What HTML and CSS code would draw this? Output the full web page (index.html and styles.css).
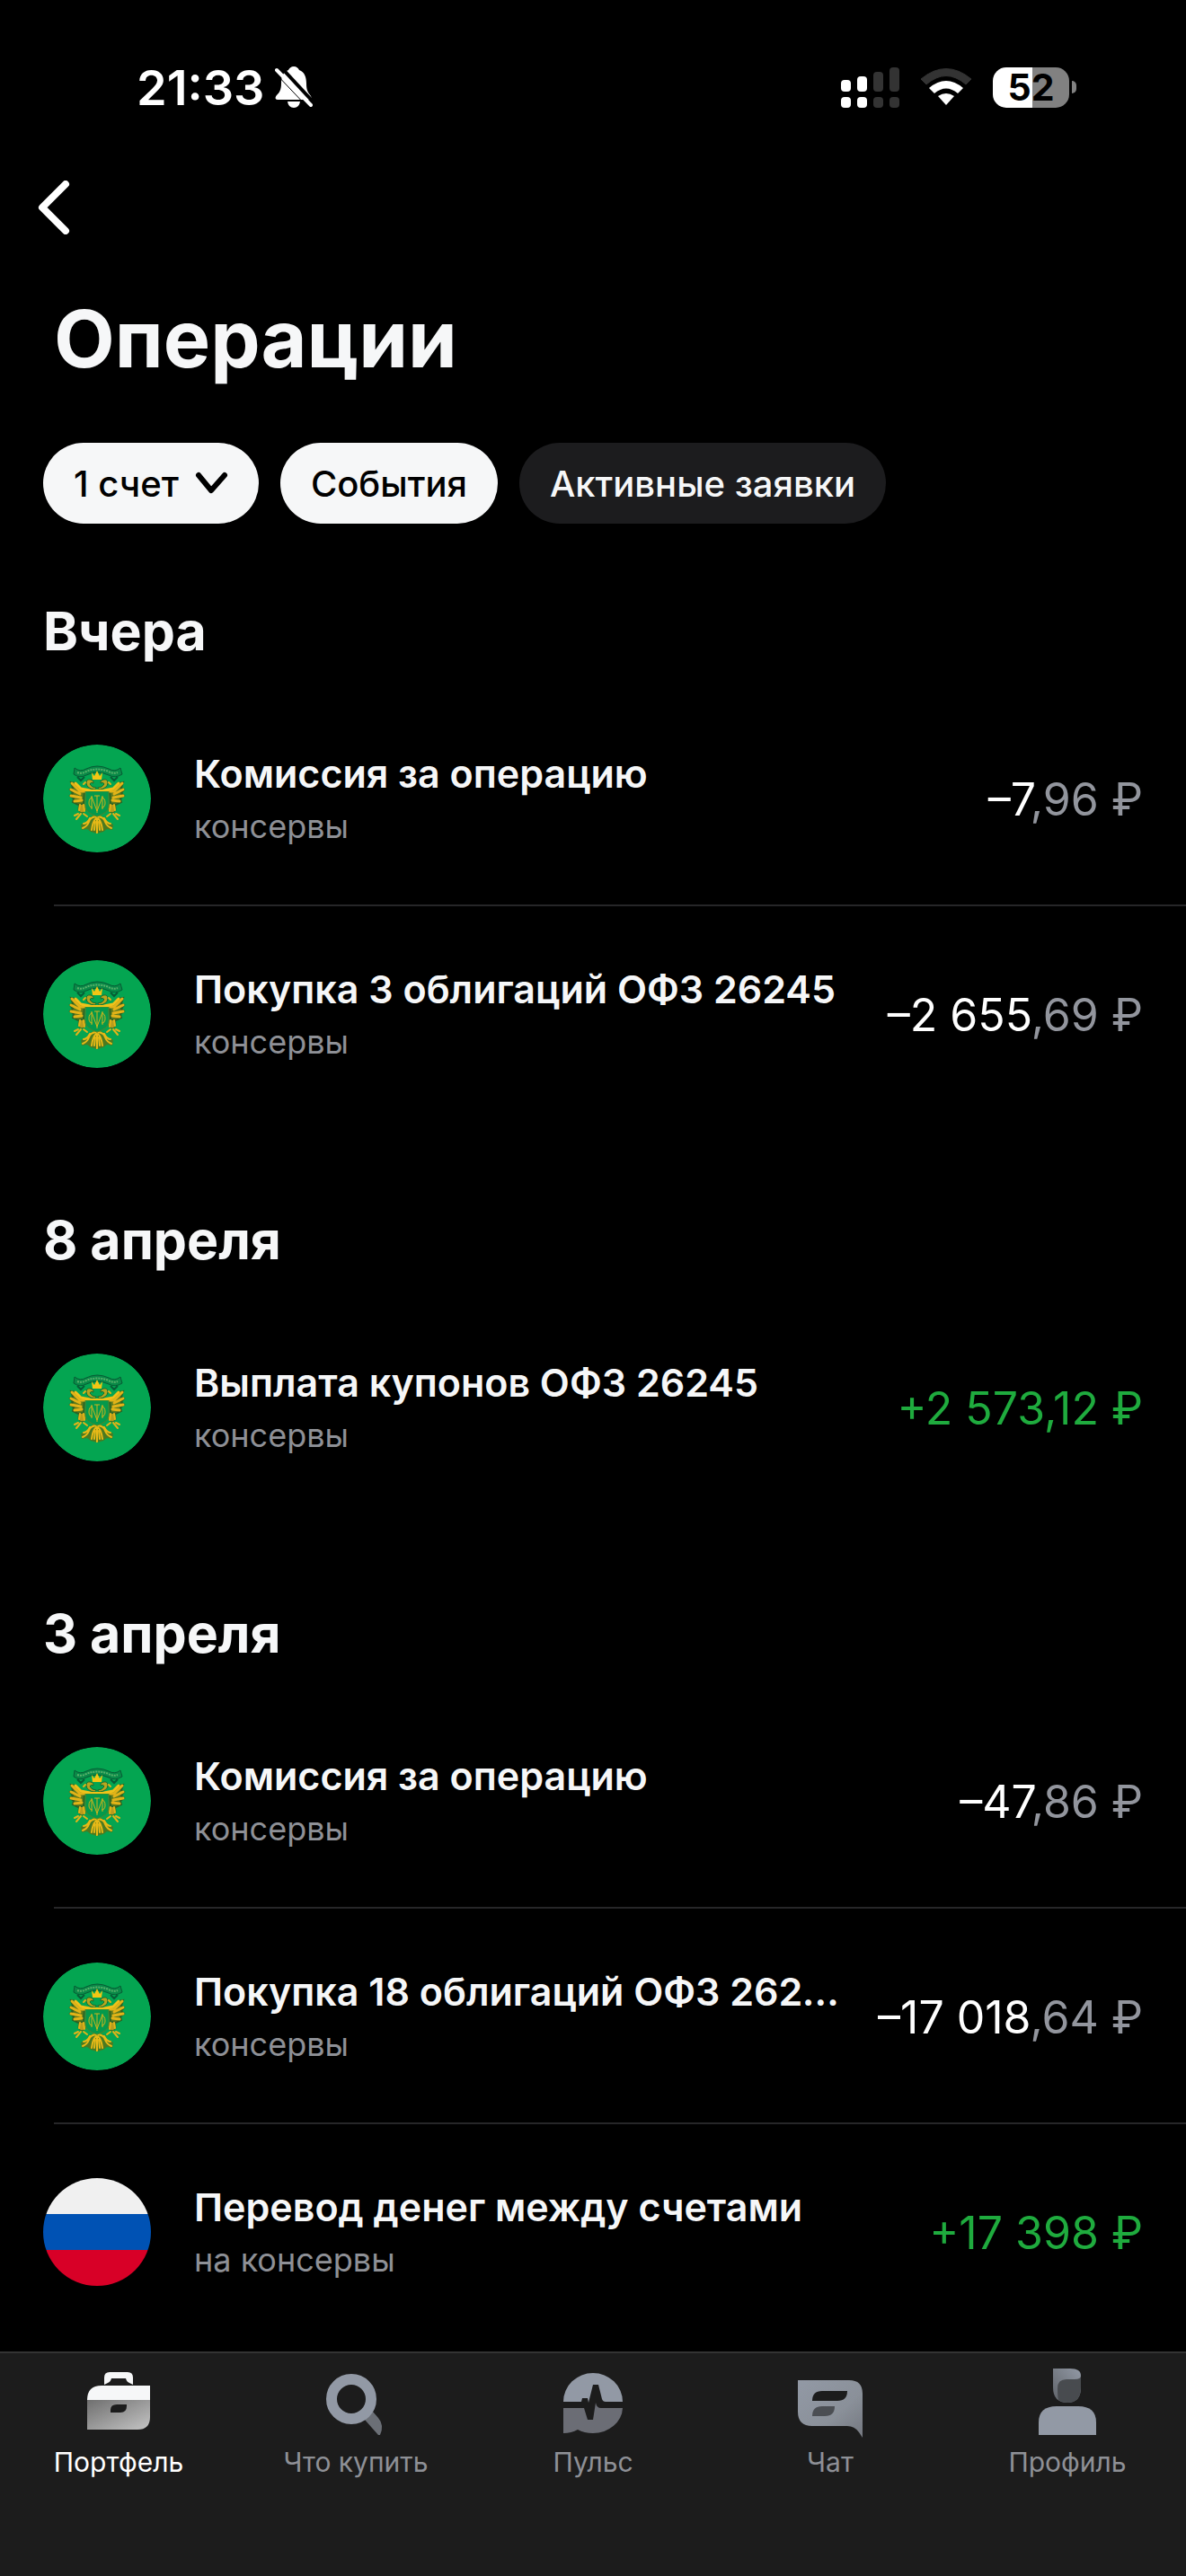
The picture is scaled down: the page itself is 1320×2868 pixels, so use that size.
FILE: index.html
```html
<!DOCTYPE html>
<html lang="ru">
<head>
<meta charset="utf-8">
<meta name="viewport" content="width=device-width, initial-scale=1">
<title>Операции</title>
<link rel="stylesheet" href="styles.css">
</head>
<body>
<svg class="defs" aria-hidden="true">
  <defs>
    <linearGradient id="case" x1="0" y1="0" x2="1" y2="1">
      <stop offset="0" stop-color="#6f6f6f"/><stop offset="1" stop-color="#c4c4c4"/>
    </linearGradient>
    <linearGradient id="steel" x1="0" y1="0" x2="1" y2="1">
      <stop offset="0" stop-color="#9299a5"/><stop offset=".6" stop-color="#8a9099"/><stop offset="1" stop-color="#747880"/>
    </linearGradient>
    <linearGradient id="hair" x1="1" y1="0" x2="0" y2="1">
      <stop offset="0" stop-color="#9299a5"/><stop offset="1" stop-color="#5f6369"/>
    </linearGradient>
    <g id="half-eagle" stroke-linecap="round" fill="none">
      <path d="M47 50L41 49L36 43L31 42L33 48L30 50L33 54L30 57L34 60L33 64L39 67L45 66L46 52Z" fill="#5f7a1c" stroke="#2a6325" stroke-width="2"/>
      <path d="M32 43L41 52H47M31 50L41 55M31 57L42 59M35 63L43 62" stroke="#e2b318" stroke-width="3"/>
      <path d="M36 43L42 49L52 51" stroke="#f0c11a" stroke-width="3"/>
      <path d="M40 67Q37 74 43 76Q49 75 47 67" fill="#b99c1c" stroke="#2f6a24" stroke-width="1"/>
      <path d="M41 67L40 73M45 67L46 74M39 77L35 79M42 77L37 83M45 77L49 80" stroke="#e2b318" stroke-width="2"/>
      <path d="M57 50Q49 49 48 43Q48 38 53 39Q57 40 56 43Q53 41 52 44Q54 48 59 48Z" fill="#b9a61f" stroke="#1c6a2c" stroke-width="1"/>
      <path d="M47 42L45 44" stroke="#e2b318" stroke-width="2"/>
      <path d="M60 79Q50 79 49 86L42 89L43 95L49 94L53 97L60 99Z" fill="#4c7a20"/>
      <path d="M59 80Q52 81 51 86Q49 91 44 93M59 82Q55 86 54 95M52 82Q49 88 45 88M60 82V98M58 86L57 95" stroke="#e8b917" stroke-width="2"/>
    </g>
    <symbol id="emblem" viewBox="0 0 120 120">
      <circle cx="60" cy="60" r="60" fill="#04a551"/>
      <path d="M35 26Q41 31 48 27Q60 21 73 27Q80 31 86 26L88 33Q80 38 73 34Q60 28 48 34Q41 38 34 33Z" fill="#0a8a48" stroke="#075c35" stroke-width="1"/>
      <path d="M38 31Q43 33 48 30Q60 25 73 30Q78 33 83 31" fill="none" stroke="#58b16a" stroke-width="2" stroke-dasharray="2 1"/>
      <path d="M38 36L42 40L46 36M83 36L79 40L75 36" fill="none" stroke="#075c35" stroke-width="2"/>
      <use href="#half-eagle"/>
      <use href="#half-eagle" transform="matrix(-1 0 0 1 120 0)"/>
      <path d="M54 31L57 35L60 29L63 35L66 31L65 39H55Z" fill="#f3c614"/>
      <path d="M47 52H73V70Q72 76 60 80Q48 76 47 70Z" fill="#04994b" stroke="#52852a" stroke-width="1"/>
      <path d="M47 51H73" stroke="#f0c317" stroke-width="2"/>
      <path d="M54 57V72M66 57V72M60 57V76M54 58L60 74L66 58M55 59Q51 59 51 65Q51 70 55 70M65 59Q69 59 69 65Q69 70 65 70M57 57H63" fill="none" stroke="#cdb41e" stroke-width="1"/>
    </symbol>
  </defs>
</svg>

<div class="status-bar">
  <div class="status-left">
    <time>21:33</time>
    <svg width="42" height="46" viewBox="0 0 42 46" role="img" aria-label="Без звука">
      <path d="M21 0C24 0 26 2 27 4C33 6 35 12 35 19C35 27 37 29 40 33C41 35 41 37 39 37H3C0 37 0 34 2 32C5 29 7 26 7 19C7 12 9 6 15 4C16 2 18 0 21 0Z" fill="#fff"/>
      <path d="M14 39H28Q27 46 21 46Q15 46 14 39Z" fill="#fff"/>
      <path d="M5 -1L44 41" stroke="#000" stroke-width="4"/>
      <path d="M2 4L40 43" stroke="#fff" stroke-width="4" stroke-linecap="round"/>
      <path d="M-1 6L37 46" stroke="#000" stroke-width="1"/>
    </svg>
  </div>
  <div class="status-right">
    <svg width="65" height="45" viewBox="0 0 65 45" role="img" aria-label="Сигнал сети">
      <g fill="#fff"><rect y="14" width="11" height="13" rx="4"/><rect x="18" y="10" width="11" height="17" rx="4"/><rect y="33" width="11" height="12" rx="4"/><rect x="18" y="33" width="11" height="12" rx="4"/></g>
      <g fill="#333"><rect x="36" y="5" width="11" height="22" rx="4"/><rect x="54" width="11" height="27" rx="4"/><rect x="36" y="33" width="11" height="12" rx="4"/><rect x="54" y="33" width="11" height="12" rx="4"/></g>
    </svg>
    <svg width="58" height="42" viewBox="0 0 58 42" role="img" aria-label="Wi-Fi">
      <path d="M1 12Q29 -11 57 12L51 18Q29 -1 7 18Z" fill="#333" stroke="#333" stroke-linejoin="round"/>
      <path d="M10 22Q29 6 48 22L42 28Q29 17 16 28Z" fill="#fff"/>
      <path d="M20 31Q29 25 38 31L29 41Z" fill="#fff"/>
    </svg>
    <div class="battery"><span class="battery-level">52</span><span class="battery-cap"></span></div>
  </div>
</div>

<header class="page-head">
  <button class="back" type="button" aria-label="Назад">
    <svg width="36" height="60" viewBox="0 0 36 60"><path d="M31 4L5 30L31 56" fill="none" stroke="#fff" stroke-width="8" stroke-linecap="round" stroke-linejoin="round"/></svg>
  </button>
  <h1>Операции</h1>
  <div class="chips">
    <button class="chip chip-on" type="button">1 счет
      <svg width="37" height="26" viewBox="0 0 37 26" aria-hidden="true"><path d="M4 4L18 21L33 4" fill="none" stroke="#000" stroke-width="6" stroke-linecap="round" stroke-linejoin="round"/></svg>
    </button>
    <button class="chip chip-on" type="button">События</button>
    <button class="chip" type="button">Активные заявки</button>
  </div>
</header>

<main>
  <section>
    <h2>Вчера</h2>
    <ul>
      <li>
        <svg class="avatar" aria-hidden="true"><use href="#emblem"/></svg>
        <div class="info"><h3>Комиссия за операцию</h3><p>консервы</p></div>
        <div class="amount">–7<span>,96 ₽</span></div>
      </li>
      <li>
        <svg class="avatar" aria-hidden="true"><use href="#emblem"/></svg>
        <div class="info"><h3>Покупка 3 облигаций ОФЗ 26245</h3><p>консервы</p></div>
        <div class="amount">–2 655<span>,69 ₽</span></div>
      </li>
    </ul>
  </section>
  <section>
    <h2>8 апреля</h2>
    <ul>
      <li>
        <svg class="avatar" aria-hidden="true"><use href="#emblem"/></svg>
        <div class="info"><h3>Выплата купонов ОФЗ 26245</h3><p>консервы</p></div>
        <div class="amount income">+2 573,12 ₽</div>
      </li>
    </ul>
  </section>
  <section>
    <h2>3 апреля</h2>
    <ul>
      <li>
        <svg class="avatar" aria-hidden="true"><use href="#emblem"/></svg>
        <div class="info"><h3>Комиссия за операцию</h3><p>консервы</p></div>
        <div class="amount">–47<span>,86 ₽</span></div>
      </li>
      <li>
        <svg class="avatar" aria-hidden="true"><use href="#emblem"/></svg>
        <div class="info"><h3>Покупка 18 облигаций ОФЗ 26245</h3><p>консервы</p></div>
        <div class="amount">–17 018<span>,64 ₽</span></div>
      </li>
      <li>
        <span class="avatar flag"></span>
        <div class="info"><h3>Перевод денег между счетами</h3><p>на консервы</p></div>
        <div class="amount income">+17 398 ₽</div>
      </li>
    </ul>
  </section>
</main>

<nav class="tabs">
  <a class="active" href="#portfolio" aria-current="page">
    <svg viewBox="0 0 96 96" aria-hidden="true">
      <path d="M32 27V19Q32 13 38 13H58Q64 13 64 19V27L60 25Q57 24 56 20H40Q39 24 36 25Z" fill="#f6f7f8"/>
      <path d="M13 44Q13 28 29 28H83V44Z" fill="#f6f7f8"/>
      <path fill-rule="evenodd" d="M13 44H83V63Q83 77 69 77H13ZM39 58V55Q39 49 46 49H57V51Q57 58 50 58Z" fill="url(#case)"/>
    </svg>
    Портфель
  </a>
  <a href="#buy">
    <svg viewBox="0 0 96 96" aria-hidden="true">
      <path d="M58 66L67 57L73 64Q80 72 75 83L73 83Z" fill="#6b6f76"/>
      <circle cx="43" cy="43" r="22" fill="none" stroke="#9299a5" stroke-width="12"/>
    </svg>
    Что купить
  </a>
  <a href="#pulse">
    <svg viewBox="0 0 96 96" aria-hidden="true">
      <path d="M15 46A33 32 0 0 1 81 46H62Q59 46 58 43L54 27H48L43 47L42 42H36L35 46Z" fill="#9299a5"/>
      <path d="M15 53H38L42 66H48L51 47Q52 53 57 53H81A33 29 0 0 1 48 81Q38 81 31 77Q24 81 15 81Z" fill="#6b6d75"/>
    </svg>
    Пульс
  </a>
  <a href="#chat">
    <svg viewBox="0 0 96 96" aria-hidden="true">
      <path d="M12 22H69Q84 22 84 37V86L80 80Q75 73 67 73H28Q12 73 12 57Z" fill="url(#steel)"/>
      <path d="M28 45Q28 34 39 34H67Q67 45 56 45Z" fill="#1c1c1c"/>
      <path d="M28 62Q28 51 39 51H53Q53 62 42 62Z" fill="#4b4e53"/>
    </svg>
    Чат
  </a>
  <a href="#profile">
    <svg viewBox="0 0 96 96" aria-hidden="true">
      <path d="M32 9H51Q63 9 63 17V30Q63 47 48 47Q32 47 32 30Z" fill="url(#hair)"/>
      <path d="M38 44Q37 40 37 31Q37 21 47 21H56Q63 21 63 17V30Q63 47 48 47Q42 47 38 44Z" fill="#484b4f"/>
      <path d="M16 83V69Q16 51 36 51H60Q80 51 80 69V83Z" fill="#9299a5"/>
    </svg>
    Профиль
  </a>
</nav>
</body>
</html>
```
FILE: styles.css
```css
* {
  box-sizing: border-box;
  margin: 0;
  padding: 0;
}

body {
  display: flex;
  flex-direction: column;
  min-height: 100vh;
  background: #000;
  color: #f6f7f8;
  font-family: Inter, "Liberation Sans", sans-serif;
}

button {
  border: 0;
  background: none;
  color: inherit;
  font: inherit;
}

svg {
  display: block;
  flex: none;
}

.defs {
  position: absolute;
  width: 0;
  height: 0;
}

.status-bar {
  display: flex;
  justify-content: space-between;
  padding: 66px 122px 0 152px;
  color: #fff;
}

.status-left,
.status-right {
  display: flex;
  align-items: center;
  height: 62px;
}

.status-left {
  gap: 12px;
  font-size: 54px;
  font-weight: 600;
}

.status-right {
  gap: 23px;
}

.battery {
  display: flex;
  align-items: center;
  gap: 3px;
}

.battery-level {
  width: 85px;
  border-radius: 15px;
  background: linear-gradient(90deg, #fff 52%, #818181 52%);
  color: #000;
  font-size: 41px;
  font-weight: 700;
  line-height: 45px;
  text-align: center;
}

.battery-cap {
  width: 5px;
  height: 14px;
  border-radius: 0 8px 8px 0;
  background: #818181;
}

.page-head {
  padding: 72px 48px 0;
}

.back {
  display: block;
  width: 60px;
  height: 62px;
  margin-left: -6px;
}

h1 {
  margin-top: 63px;
  padding-left: 12px;
  font-size: 88px;
  font-weight: 700;
  line-height: 104px;
}

.chips {
  display: flex;
  gap: 24px;
  margin-top: 64px;
}

.chip {
  display: flex;
  align-items: center;
  gap: 18px;
  height: 90px;
  padding: 0 34px;
  border-radius: 45px;
  background: #1c1c1e;
  font-size: 40px;
  font-weight: 500;
  white-space: nowrap;
}

.chip-on {
  background: #f6f7f8;
  color: #000;
}

section {
  padding-top: 96px;
}

section:first-child {
  padding-top: 84px;
}

h2 {
  padding: 0 48px 30px;
  font-size: 59px;
  font-weight: 700;
  line-height: 72px;
}

ul {
  list-style: none;
}

li {
  display: flex;
  align-items: center;
  height: 240px;
  padding-right: 48px;
  margin-left: 48px;
  background: linear-gradient(#262628, #262628) 12px 100% / 100% 2px no-repeat;
}

li:last-child {
  background: none;
}

.avatar {
  flex: none;
  width: 120px;
  height: 120px;
  margin-right: 48px;
  border-radius: 50%;
}

.flag {
  background: linear-gradient(#f0f0f0 33%, #0052b4 33% 67%, #d80027 67%);
}

.info {
  flex: 1;
  min-width: 0;
  padding-top: 2px;
}

h3 {
  overflow: hidden;
  font-size: 43px;
  font-weight: 600;
  line-height: 60px;
  text-overflow: ellipsis;
  white-space: nowrap;
}

.info p {
  color: #8e9096;
  font-size: 36px;
  line-height: 58px;
}

.amount {
  margin-left: 40px;
  padding-top: 2px;
  color: #fff;
  font-size: 50px;
  white-space: nowrap;
}

.amount span {
  color: #92959d;
}

.amount.income {
  color: #1fab3e;
}

.tabs {
  display: flex;
  height: 250px;
  margin-top: auto;
  border-top: 2px solid #333;
  background: #1c1c1c;
}

.tabs a {
  display: flex;
  flex: 1;
  flex-direction: column;
  align-items: center;
  padding-top: 8px;
  color: #8e9096;
  font-size: 30px;
  line-height: 34px;
  text-decoration: none;
}

.tabs svg {
  width: 96px;
  height: 96px;
}

.tabs .active {
  color: #fff;
}
```
